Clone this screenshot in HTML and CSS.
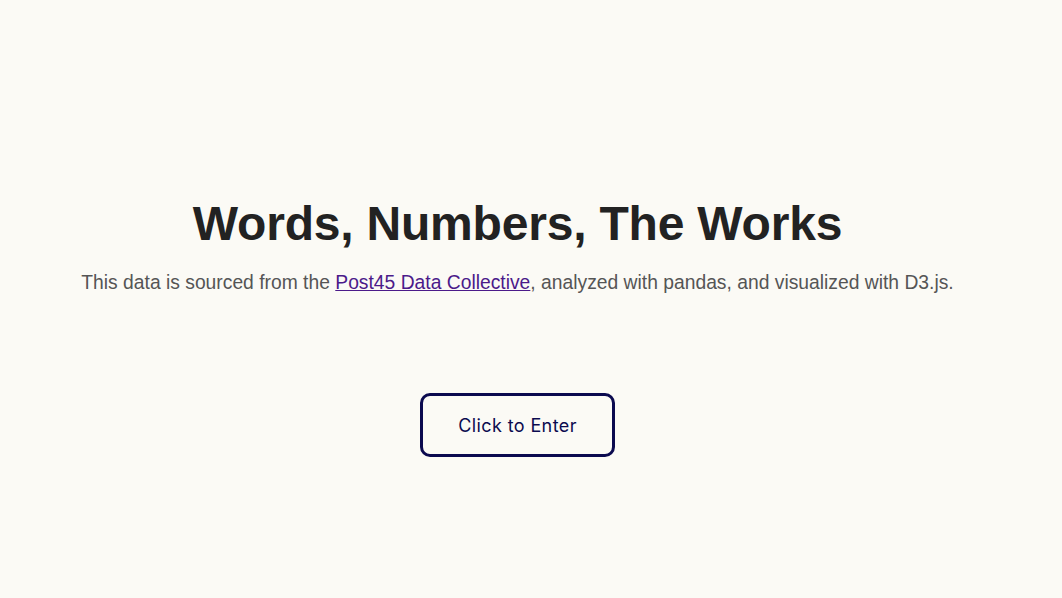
FILE: index.html
```html
<!DOCTYPE html>
<html lang="en">
<head>
<meta charset="utf-8">
<title>Words, Numbers, The Works</title>
<link rel="stylesheet" href="styles.css">
</head>
<body>
<main class="intro">
  <h1 class="intro-title">Words, Numbers, The Works</h1>
  <p class="intro-text">This data is sourced from the <a class="intro-link" href="#">Post45 Data Collective</a>, analyzed with pandas, and visualized with D3.js.</p>
  <button class="enter-btn" type="button">Click to Enter</button>
</main>
</body>
</html>
```
FILE: styles.css
```css
html, body {
  margin: 0;
  padding: 0;
  background: #fbfaf5;
}
body {
  height: 598px;
  font-family: "Liberation Sans", Arial, sans-serif;
}
.intro {
  width: 1035px;
  display: flex;
  flex-direction: column;
  align-items: center;
  padding-top: 193px;
}
.intro-title {
  margin: 0;
  font-size: 48px;
  font-weight: 700;
  color: #222;
  line-height: 62px;
  letter-spacing: -0.2px;
}
.intro-text {
  margin: 16px 0 0;
  font-size: 19.3px;
  color: #555;
  line-height: 24px;
}
.intro-link {
  color: #4b1a8a;
}
.enter-btn {
  margin-top: 98px;
  width: 195px;
  height: 64px;
  border: 3px solid #0b0a4f;
  border-radius: 10px;
  background: transparent;
  color: #0b0a4f;
  font-family: Inter, sans-serif;
  font-size: 18px;
  letter-spacing: 0.4px;
}
```
